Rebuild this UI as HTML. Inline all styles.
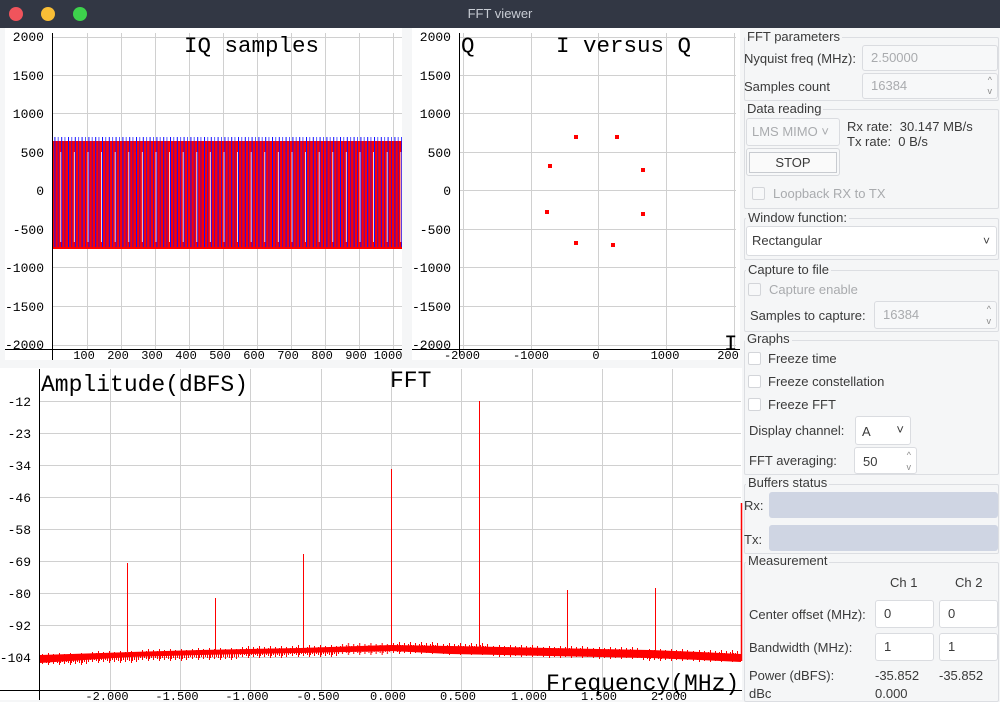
<!DOCTYPE html>
<html><head><meta charset="utf-8"><style>
*{margin:0;padding:0;box-sizing:border-box}
body{width:1000px;height:700px;overflow:hidden;background:#f5f6f7;font-family:"Liberation Sans","DejaVu Sans",sans-serif;font-size:13px;color:#3a3a3a;position:relative}
.a{position:absolute;white-space:nowrap}
.tb{position:absolute;left:0;top:0;width:1000px;height:28px;background:#323744;color:#c8ccd4;text-align:center;line-height:28px;font-size:13px}
.dot{position:absolute;top:7px;width:14px;height:14px;border-radius:50%}
.gb{position:absolute;border:1px solid #dcdee2;border-radius:2px}
.gt{position:absolute;background:#f5f6f7;padding:0 2px;line-height:14px}
.in{position:absolute;background:#fff;border:1px solid #dadce0;border-radius:3px;padding-left:8px;line-height:24px}
.dis{background:#f7f8f9;color:#a9abae}
.cb{position:absolute;width:13px;height:13px;border:1px solid #d3d5d9;background:#fff;border-radius:2px}
.bar{position:absolute;background:#cfd5e3;border-radius:3px}
.grey{color:#a9abae}
.sp{position:absolute;right:5px;font-size:9px;color:#888;line-height:9px}
</style></head><body>
<div class="tb">FFT viewer</div>
<div class="dot" style="left:9px;background:#f0545c"></div>
<div class="dot" style="left:41px;background:#f9be36"></div>
<div class="dot" style="left:73px;background:#3dd24c"></div>

<svg class="a" style="left:0;top:0" width="1000" height="700" font-family="Liberation Mono, monospace" font-size="13">
<defs>
<pattern id="bl" width="6.8" height="10" patternUnits="userSpaceOnUse"><rect x="0" width="1" height="10" fill="#1010ff"/><rect x="3.4" width="0.7" height="10" fill="#1010ff"/></pattern>
<pattern id="wg" width="13.6" height="10" patternUnits="userSpaceOnUse"><rect x="6" width="0.8" height="10" fill="#fff"/></pattern>
<pattern id="nz" width="0.22" height="1" patternUnits="objectBoundingBox" patternContentUnits="userSpaceOnUse"><rect x="0" y="5" width="1" height="6" fill="#f00"/><rect x="2" y="3" width="1" height="10" fill="#f00"/><rect x="4" y="6" width="1" height="5" fill="#f00"/><rect x="6" y="4" width="1" height="8" fill="#f00"/><rect x="8" y="2" width="1" height="12" fill="#f00"/><rect x="9" y="5" width="1" height="7" fill="#f00"/></pattern>
</defs>
<!-- IQ plot -->
<rect x="5" y="28" width="397" height="332" fill="#fff"/>
<g stroke="#d0d0d0" stroke-width="1">
<line x1="52" x2="402" y1="37.5" y2="37.5"/><line x1="52" x2="402" y1="75.5" y2="75.5"/><line x1="52" x2="402" y1="113.5" y2="113.5"/><line x1="52" x2="402" y1="152.5" y2="152.5"/><line x1="52" x2="402" y1="190.5" y2="190.5"/><line x1="52" x2="402" y1="229.5" y2="229.5"/><line x1="52" x2="402" y1="267.5" y2="267.5"/><line x1="52" x2="402" y1="306.5" y2="306.5"/><line x1="52" x2="402" y1="345.5" y2="345.5"/>
<line x1="87.5" x2="87.5" y1="33" y2="350"/><line x1="121.5" x2="121.5" y1="33" y2="350"/><line x1="155.5" x2="155.5" y1="33" y2="350"/><line x1="189.5" x2="189.5" y1="33" y2="350"/><line x1="223.5" x2="223.5" y1="33" y2="350"/><line x1="257.5" x2="257.5" y1="33" y2="350"/><line x1="291.5" x2="291.5" y1="33" y2="350"/><line x1="325.5" x2="325.5" y1="33" y2="350"/><line x1="359.5" x2="359.5" y1="33" y2="350"/><line x1="393.5" x2="393.5" y1="33" y2="350"/>
</g>
<rect x="53" y="141" width="349" height="108" fill="#ff0000"/>
<rect x="53" y="137" width="349" height="110" fill="url(#bl)"/>
<rect x="53" y="152" width="349" height="90" fill="url(#wg)"/>
<line x1="52.5" x2="52.5" y1="33" y2="360" stroke="#000"/>
<line x1="5" x2="402" y1="349.5" y2="349.5" stroke="#000"/>
<g text-anchor="end"><text x="44" y="41">2000</text><text x="44" y="80">1500</text><text x="44" y="118">1000</text><text x="44" y="157">500</text><text x="44" y="195">0</text><text x="44" y="234">-500</text><text x="44" y="272">-1000</text><text x="44" y="311">-1500</text><text x="44" y="349">-2000</text></g>
<g text-anchor="middle" font-size="12"><text x="84" y="359">100</text><text x="118" y="359">200</text><text x="152" y="359">300</text><text x="186" y="359">400</text><text x="220" y="359">500</text><text x="254" y="359">600</text><text x="288" y="359">700</text><text x="322" y="359">800</text><text x="356" y="359">900</text><text x="388" y="359">1000</text></g>
<text x="184" y="52" font-size="22.5">IQ samples</text>

<!-- IvQ plot -->
<rect x="412" y="28" width="328" height="332" fill="#fff"/>
<g stroke="#d0d0d0">
<line x1="459" x2="736" y1="37.5" y2="37.5"/><line x1="459" x2="736" y1="75.5" y2="75.5"/><line x1="459" x2="736" y1="113.5" y2="113.5"/><line x1="459" x2="736" y1="152.5" y2="152.5"/><line x1="459" x2="736" y1="190.5" y2="190.5"/><line x1="459" x2="736" y1="229.5" y2="229.5"/><line x1="459" x2="736" y1="267.5" y2="267.5"/><line x1="459" x2="736" y1="306.5" y2="306.5"/><line x1="459" x2="736" y1="345.5" y2="345.5"/>
<line x1="463.5" x2="463.5" y1="33" y2="350"/><line x1="531.5" x2="531.5" y1="33" y2="350"/><line x1="598.5" x2="598.5" y1="33" y2="350"/><line x1="666.5" x2="666.5" y1="33" y2="350"/><line x1="734.5" x2="734.5" y1="33" y2="350"/>
</g>
<g fill="#ff0000"><rect x="574" y="135" width="4" height="4"/><rect x="615" y="135" width="4" height="4"/><rect x="548" y="164" width="4" height="4"/><rect x="641" y="168" width="4" height="4"/><rect x="545" y="210" width="4" height="4"/><rect x="641" y="212" width="4" height="4"/><rect x="574" y="241" width="4" height="4"/><rect x="611" y="243" width="4" height="4"/></g>
<line x1="459.5" x2="459.5" y1="33" y2="356" stroke="#000"/>
<line x1="412" x2="740" y1="349.5" y2="349.5" stroke="#000"/>
<g text-anchor="end"><text x="451" y="41">2000</text><text x="451" y="80">1500</text><text x="451" y="118">1000</text><text x="451" y="157">500</text><text x="451" y="195">0</text><text x="451" y="234">-500</text><text x="451" y="272">-1000</text><text x="451" y="311">-1500</text><text x="451" y="349">-2000</text></g>
<g text-anchor="middle" font-size="12"><text x="462" y="359">-2000</text><text x="531" y="359">-1000</text><text x="596" y="359">0</text><text x="665" y="359">1000</text><text x="728" y="359">200</text></g>
<text x="461" y="52" font-size="22.5">Q</text>
<text x="556" y="52" font-size="22.5">I versus Q</text>
<text x="724" y="350" font-size="22.5">I</text>

<!-- FFT plot -->
<rect x="0" y="368" width="742" height="332" fill="#fff"/>
<g stroke="#d0d0d0">
<line x1="39" x2="741" y1="401.5" y2="401.5"/><line x1="39" x2="741" y1="433.5" y2="433.5"/><line x1="39" x2="741" y1="465.5" y2="465.5"/><line x1="39" x2="741" y1="497.5" y2="497.5"/><line x1="39" x2="741" y1="529.5" y2="529.5"/><line x1="39" x2="741" y1="561.5" y2="561.5"/><line x1="39" x2="741" y1="593.5" y2="593.5"/><line x1="39" x2="741" y1="625.5" y2="625.5"/><line x1="39" x2="741" y1="657.5" y2="657.5"/>
<line x1="110.5" x2="110.5" y1="369" y2="690"/><line x1="180.5" x2="180.5" y1="369" y2="690"/><line x1="250.5" x2="250.5" y1="369" y2="690"/><line x1="321.5" x2="321.5" y1="369" y2="690"/><line x1="391.5" x2="391.5" y1="369" y2="690"/><line x1="461.5" x2="461.5" y1="369" y2="690"/><line x1="532.5" x2="532.5" y1="369" y2="690"/><line x1="602.5" x2="602.5" y1="369" y2="690"/><line x1="672.5" x2="672.5" y1="369" y2="690"/>
</g>
<polygon fill="#ff0000" points="40,655 130,652 200,650 300,648 391,645 450,646 550,648 650,650 700,652 741,654 741,662 700,660 650,658 550,656 450,654 391,651 300,653 200,655 130,657 40,663"/>
<g fill="url(#nz)">
<rect x="40" y="651" width="50" height="16"/><rect x="90" y="649" width="50" height="16"/><rect x="140" y="647" width="50" height="16"/><rect x="190" y="646" width="50" height="16"/><rect x="240" y="644" width="50" height="16"/><rect x="290" y="643" width="50" height="16"/><rect x="340" y="641" width="51" height="16"/>
<rect x="391" y="640" width="50" height="16"/><rect x="441" y="641" width="50" height="16"/><rect x="491" y="643" width="50" height="16"/><rect x="541" y="644" width="50" height="16"/><rect x="591" y="645" width="50" height="16"/><rect x="641" y="647" width="50" height="16"/><rect x="691" y="648" width="50" height="16"/>
</g>
<g stroke="#ff0000" stroke-width="1">
<line x1="127.5" x2="127.5" y1="563" y2="652"/><line x1="215.5" x2="215.5" y1="598" y2="650"/><line x1="303.5" x2="303.5" y1="554" y2="648"/><line x1="391.5" x2="391.5" y1="469" y2="645"/><line x1="479.5" x2="479.5" y1="401" y2="647"/><line x1="567.5" x2="567.5" y1="590" y2="649"/><line x1="655.5" x2="655.5" y1="588" y2="651"/>
<line x1="741.5" x2="741.5" y1="503" y2="661" stroke-width="1.5"/>
</g>
<line x1="39.5" x2="39.5" y1="369" y2="700" stroke="#000"/>
<line x1="0" x2="742" y1="690.5" y2="690.5" stroke="#000"/>
<g text-anchor="end"><text x="31" y="406">-12</text><text x="31" y="438">-23</text><text x="31" y="470">-34</text><text x="31" y="502">-46</text><text x="31" y="534">-58</text><text x="31" y="566">-69</text><text x="31" y="598">-80</text><text x="31" y="630">-92</text><text x="31" y="662">-104</text></g>
<g text-anchor="middle" font-size="12"><text x="107" y="700">-2.000</text><text x="177" y="700">-1.500</text><text x="247" y="700">-1.000</text><text x="318" y="700">-0.500</text><text x="388" y="700">0.000</text><text x="458" y="700">0.500</text><text x="529" y="700">1.000</text><text x="599" y="700">1.500</text><text x="669" y="700">2.000</text></g>
<text x="41" y="391" font-size="23">Amplitude(dBFS)</text>
<text x="390" y="387" font-size="23">FFT</text>
<text x="546" y="690" font-size="23">Frequency(MHz)</text>
</svg>

<!-- Right panel -->
<div class="gb" style="left:744px;top:37px;width:255px;height:64px"></div>
<div class="gt" style="left:745px;top:30px">FFT parameters</div>
<div class="a" style="left:744px;top:51px">Nyquist freq (MHz):</div>
<div class="in dis" style="left:862px;top:45px;width:136px;height:26px">2.50000</div>
<div class="a" style="left:744px;top:79px">Samples count</div>
<div class="in dis" style="left:862px;top:73px;width:136px;height:26px">16384<span class="sp" style="top:2px">^</span><span class="sp" style="top:13px">v</span></div>

<div class="gb" style="left:744px;top:109px;width:255px;height:100px"></div>
<div class="gt" style="left:745px;top:102px">Data reading</div>
<div class="in dis" style="left:746px;top:118px;width:94px;height:28px;line-height:26px;padding-left:5px">LMS MIMO ˅</div>
<div class="a" style="left:847px;top:119px">Rx rate:&nbsp; 30.147 MB/s</div>
<div class="a" style="left:847px;top:134px">Tx rate:&nbsp; 0 B/s</div>
<div class="a" style="left:746px;top:148px;width:94px;height:28px;border:1px solid #d6d8dc;border-radius:3px;background:#f7f8f9"></div>
<div class="a" style="left:749px;top:152px;width:88px;height:21px;border:1px solid #c8cbd0;background:#fafafa;text-align:center;line-height:19px">STOP</div>
<div class="cb" style="left:752px;top:187px;background:#f7f8f9"></div>
<div class="a grey" style="left:773px;top:186px">Loopback RX to TX</div>

<div class="gb" style="left:744px;top:218px;width:255px;height:42px"></div>
<div class="gt" style="left:746px;top:211px">Window function:</div>
<div class="in" style="left:746px;top:226px;width:251px;height:30px;line-height:28px;padding-left:5px">Rectangular<span style="position:absolute;right:6px;top:0;font-size:12px">˅</span></div>

<div class="gb" style="left:744px;top:270px;width:255px;height:62px"></div>
<div class="gt" style="left:746px;top:263px">Capture to file</div>
<div class="cb" style="left:748px;top:283px;background:#f7f8f9"></div>
<div class="a grey" style="left:769px;top:282px">Capture enable</div>
<div class="a" style="left:750px;top:308px">Samples to capture:</div>
<div class="in dis" style="left:874px;top:301px;width:123px;height:28px;line-height:26px">16384<span class="sp" style="top:3px">^</span><span class="sp" style="top:15px">v</span></div>

<div class="gb" style="left:744px;top:340px;width:255px;height:135px"></div>
<div class="gt" style="left:745px;top:332px">Graphs</div>
<div class="cb" style="left:748px;top:352px"></div><div class="a" style="left:768px;top:351px">Freeze time</div>
<div class="cb" style="left:748px;top:375px"></div><div class="a" style="left:768px;top:374px">Freeze constellation</div>
<div class="cb" style="left:748px;top:398px"></div><div class="a" style="left:768px;top:397px">Freeze FFT</div>
<div class="a" style="left:749px;top:423px">Display channel:</div>
<div class="in" style="left:855px;top:416px;width:56px;height:29px;line-height:29px;padding-left:6px">A<span style="position:absolute;right:6px;top:-2px">˅</span></div>
<div class="a" style="left:749px;top:453px">FFT averaging:</div>
<div class="in" style="left:854px;top:447px;width:63px;height:27px;line-height:27px">50<span class="sp" style="top:3px">^</span><span class="sp" style="top:15px">v</span></div>

<div class="gb" style="left:744px;top:484px;width:255px;height:70px"></div>
<div class="gt" style="left:746px;top:476px">Buffers status</div>
<div class="a" style="left:744px;top:498px">Rx:</div><div class="bar" style="left:769px;top:492px;width:229px;height:26px"></div>
<div class="a" style="left:744px;top:532px">Tx:</div><div class="bar" style="left:769px;top:525px;width:229px;height:26px"></div>

<div class="gb" style="left:744px;top:562px;width:255px;height:140px"></div>
<div class="gt" style="left:746px;top:554px">Measurement</div>
<div class="a" style="left:890px;top:575px">Ch 1</div>
<div class="a" style="left:955px;top:575px">Ch 2</div>
<div class="a" style="left:749px;top:607px">Center offset (MHz):</div>
<div class="in" style="left:875px;top:600px;width:59px;height:28px;line-height:26px">0</div>
<div class="in" style="left:939px;top:600px;width:59px;height:28px;line-height:26px">0</div>
<div class="a" style="left:749px;top:640px">Bandwidth (MHz):</div>
<div class="in" style="left:875px;top:633px;width:59px;height:28px;line-height:26px">1</div>
<div class="in" style="left:939px;top:633px;width:59px;height:28px;line-height:26px">1</div>
<div class="a" style="left:749px;top:668px">Power (dBFS):</div>
<div class="a" style="left:875px;top:668px">-35.852</div>
<div class="a" style="left:939px;top:668px">-35.852</div>
<div class="a" style="left:749px;top:686px">dBc</div>
<div class="a" style="left:875px;top:686px">0.000</div>
</body></html>
